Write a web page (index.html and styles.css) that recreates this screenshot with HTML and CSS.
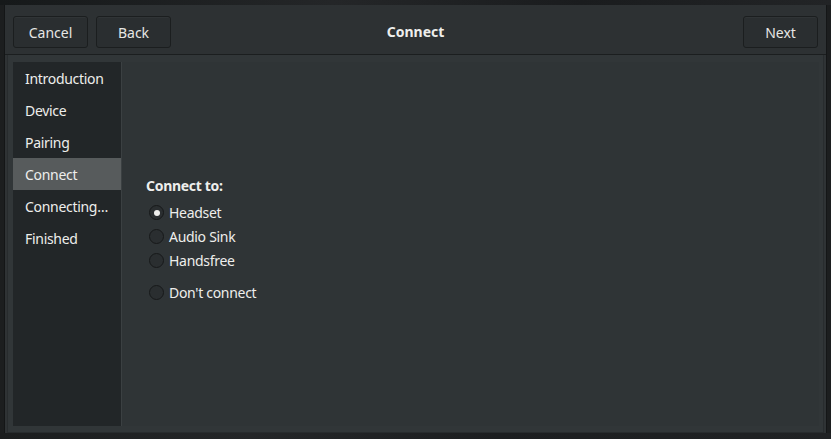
FILE: index.html
```html
<!DOCTYPE html>
<html>
<head>
<meta charset="utf-8">
<link rel="stylesheet" href="styles.css">
</head>
<body>
<div class="desk-top"></div>
<div class="window">
  <header class="headerbar">
    <div class="hb-left">
      <button class="btn">Cancel</button>
      <button class="btn">Back</button>
    </div>
    <div class="title">Connect</div>
    <div class="hb-right">
      <button class="btn">Next</button>
    </div>
  </header>
  <main class="body">
    <nav class="sidebar">
      <div class="item">Introduction</div>
      <div class="item">Device</div>
      <div class="item">Pairing</div>
      <div class="item selected">Connect</div>
      <div class="item">Connecting…</div>
      <div class="item">Finished</div>
    </nav>
    <section class="page">
      <div class="form">
        <div class="label">Connect to:</div>
        <label class="radio"><span class="dot checked"></span>Headset</label>
        <label class="radio"><span class="dot"></span>Audio Sink</label>
        <label class="radio"><span class="dot"></span>Handsfree</label>
        <label class="radio spaced"><span class="dot"></span>Don't connect</label>
      </div>
    </section>
  </main>
</div>
<div class="desk-bottom"></div>
</body>
</html>
```
FILE: styles.css
```css
html, body {
  margin: 0;
  padding: 0;
  width: 831px;
  height: 439px;
  overflow: hidden;
  background: #1c1e1f;
  font-family: "Noto Sans", "Open Sans", sans-serif;
  font-size: 13px;
  color: #eeeeec;
}
.desk-top {
  height: 5px;
  background: linear-gradient(90deg, #16191a, #242628 40%, #1a1c1e 70%, #222426);
}
.window {
  margin: 0 5px 0 5px;
  width: 821px;
  height: 428px;
  display: flex;
  flex-direction: column;
  background: #2f3335;
  box-shadow: -1px 0 0 #141617, 1px 0 0 #141617;
}
.headerbar {
  height: 50px;
  flex: none;
  box-sizing: border-box;
  display: grid;
  grid-template-columns: 1fr auto 1fr;
  align-items: start;
  padding: 11px 8px 0 8px;
  background: #2d3133;
  border-bottom: 1px solid #1b1e1f;
}
.hb-left, .hb-right {
  display: flex;
  gap: 8px;
}
.hb-right {
  justify-content: flex-end;
}
.btn {
  width: 75px;
  height: 32px;
  background: #2a2e30;
  border: 1px solid #1b1e1f;
  border-radius: 3px;
  color: #e6e6e4;
  font-family: inherit;
  font-size: 14px;
  padding: 0;
  box-shadow: inset 0 1px 0 rgba(255,255,255,0.03);
}
.title {
  font-weight: bold;
  font-size: 14px;
  line-height: 32px;
  color: #eeeeec;
}
.body {
  flex: 1;
  display: flex;
  margin: 0 2px 0 2px;
  padding: 7px 4px 6px 5px;
  background: #313638;
  border: 1px solid #282c2e;
  border-top: none;
}
.sidebar {
  width: 108px;
  background: #222628;
  border-right: 1px solid #3b4042;
}
.item {
  height: 32px;
  line-height: 33px;
  padding-left: 12px;
  font-size: 14px;
  color: #eeeeec;
  white-space: nowrap;
  letter-spacing: -0.3px;
}
.item.selected {
  background: #575b5c;
}
.page {
  flex: 1;
  background: #2f3436;
  display: flex;
  align-items: center;
}
.form {
  padding-left: 24px;
  margin-top: -9px;
}
.label {
  font-weight: bold;
  font-size: 14px;
  letter-spacing: -0.3px;
  height: 22px;
  line-height: 22px;
  margin-bottom: 4px;
}
.radio {
  display: flex;
  align-items: center;
  height: 24px;
  padding-left: 3px;
  gap: 5px;
  font-size: 14px;
  letter-spacing: -0.3px;
}
.radio.spaced {
  margin-top: 8px;
}
.dot {
  width: 15px;
  height: 15px;
  border-radius: 50%;
  border: 1px solid #17191a;
  background: #2a2e30;
  box-sizing: border-box;
  display: flex;
  align-items: center;
  justify-content: center;
}
.dot.checked::after {
  content: "";
  width: 6px;
  height: 6px;
  border-radius: 50%;
  background: #eeeeec;
}
.desk-bottom {
  height: 6px;
  background: linear-gradient(90deg, #1b1d1e, #242628 30%, #1c1e20 60%, #202224);
}
```
